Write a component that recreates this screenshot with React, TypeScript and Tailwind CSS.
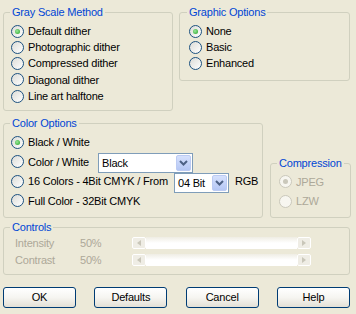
import React from "react";

const font = "font-['Liberation_Sans',Arial,sans-serif] text-[11px] tracking-[-0.2px]";

function Radio({ checked = false, disabled = false }: { checked?: boolean; disabled?: boolean }) {
  return (
    <span
      className={`flex items-center justify-center w-[13px] h-[13px] shrink-0 rounded-full border ${
        disabled
          ? "border-[#CAC8BB] bg-[#F7F6F0]"
          : "border-[#1C5180] bg-linear-to-br from-[#DCDCD7] to-white"
      }`}
    >
      {checked && (
        <span
          className={`w-[5px] h-[5px] rounded-full ${
            disabled
              ? "bg-[#CAC8BB]"
              : "bg-[radial-gradient(circle_at_40%_40%,#9BE89B,#21A121)]"
          }`}
        />
      )}
    </span>
  );
}

function Option({
  label,
  checked,
  disabled,
  rowClass = "h-[16.25px]",
}: {
  label: string;
  checked?: boolean;
  disabled?: boolean;
  rowClass?: string;
}) {
  return (
    <div className={`flex items-center gap-[4px] ${rowClass}`}>
      <Radio checked={checked} disabled={disabled} />
      <span className={disabled ? "text-[#ACA899]" : "text-black"}>{label}</span>
    </div>
  );
}

function Group({
  title,
  className,
  legendClass = "ml-[6px]",
  children,
}: {
  title: string;
  className: string;
  legendClass?: string;
  children: React.ReactNode;
}) {
  return (
    <fieldset className={`border border-[#D0D0BF] rounded-[3px] ${className}`}>
      <legend className={`px-[2px] leading-[14px] text-[#0046D5] ${legendClass}`}>{title}</legend>
      {children}
    </fieldset>
  );
}

function Combo({ value, width, className = "" }: { value: string; width: string; className?: string }) {
  return (
    <div className={`flex items-center justify-between h-[20px] border border-[#7F9DB9] bg-white ${width} ${className}`}>
      <span className="pl-[3px] text-black">{value}</span>
      <span className="flex items-center justify-center w-[15px] h-[16px] mr-[1px] rounded-[2px] border border-[#BCCBF3] bg-linear-to-b from-[#D6E1FD] to-[#B5C7F4]">
        <svg width="9" height="6" viewBox="0 0 9 6">
          <path d="M1 1 L4.5 4.5 L8 1" fill="none" stroke="#4D6185" strokeWidth="2" />
        </svg>
      </span>
    </div>
  );
}

function ScrollBar() {
  return (
    <div className="flex w-[179px] h-[12px]">
      <span className="flex items-center justify-center w-[14px] h-full rounded-[2px] border border-white bg-[#EFEDE5]">
        <svg width="4" height="6" viewBox="0 0 4 6">
          <path d="M4 0 L0 3 L4 6 Z" fill="#C9C6B9" />
        </svg>
      </span>
      <span className="flex-1 bg-linear-to-b from-[#EFEDE4] via-white to-white" />
      <span className="flex items-center justify-center w-[14px] h-full rounded-[2px] border border-white bg-[#EFEDE5]">
        <svg width="4" height="6" viewBox="0 0 4 6">
          <path d="M0 0 L4 3 L0 6 Z" fill="#C9C6B9" />
        </svg>
      </span>
    </div>
  );
}

function Button({ label }: { label: string }) {
  return (
    <button className="w-[73px] h-[21px] rounded-[3px] border border-[#003C74] bg-linear-to-b from-white via-[#F6F5F1] to-[#E3E0D6] text-black">
      {label}
    </button>
  );
}

export default function App() {
  return (
    <div className={`w-[356px] h-[314px] bg-[#ECE9D8] pt-[5px] px-[3px] ${font}`}>
      <div className="flex items-start gap-[6px]">
        <Group title="Gray Scale Method" className="w-[170px] h-[106px]">
          <div className="pl-[7px] pt-[4px]">
            <Option label="Default dither" checked />
            <Option label="Photographic dither" />
            <Option label="Compressed dither" />
            <Option label="Diagonal dither" />
            <Option label="Line art halftone" />
          </div>
        </Group>
        <Group title="Graphic Options" className="w-[171px] h-[76px]" legendClass="ml-[7px]">
          <div className="pl-[9px] pt-[4px]">
            <Option label="None" checked />
            <Option label="Basic" />
            <Option label="Enhanced" />
          </div>
        </Group>
      </div>

      <div className="flex items-end gap-[7px] mt-[5px]">
        <Group title="Color Options" className="w-[260px] h-[102px]">
          <div className="pl-[7px] pt-[2.5px]">
            <Option label="Black / White" checked rowClass="h-[19.5px]" />
            <div className="flex items-center h-[19.5px]">
              <Radio />
              <span className="ml-[4px] w-[70px]">Color / White</span>
              <Combo value="Black" width="w-[95px]" className="mt-[2.5px]" />
            </div>
            <div className="flex items-center h-[19.5px]">
              <Radio />
              <span className="ml-[4px] w-[146px] whitespace-nowrap">16 Colors - 4Bit CMYK / From</span>
              <Combo value="04 Bit" width="w-[55px]" className="mt-[4px]" />
              <span className="ml-[6px]">RGB</span>
            </div>
            <Option label="Full Color - 32Bit CMYK" rowClass="h-[19.5px]" />
          </div>
        </Group>
        <Group title="Compression" className="w-[81px] h-[62px]" legendClass="ml-[6px]">
          <div className="pl-[8px] pt-[2px]">
            <Option label="JPEG" checked disabled rowClass="h-[19.5px]" />
            <Option label="LZW" disabled rowClass="h-[19.5px]" />
          </div>
        </Group>
      </div>

      <Group title="Controls" className="w-[347px] h-[55px] mt-[2px]">
        <div className="pl-[11px] pt-[0.5px] text-[#ACA899]">
          <div className="flex items-center h-[17px]">
            <span className="w-[65px]">Intensity</span>
            <span className="w-[52px]">50%</span>
            <ScrollBar />
          </div>
          <div className="flex items-center h-[17px]">
            <span className="w-[65px]">Contrast</span>
            <span className="w-[52px]">50%</span>
            <ScrollBar />
          </div>
        </div>
      </Group>

      <div className="flex justify-between w-[347px] mt-[12px]">
        <Button label="OK" />
        <Button label="Defaults" />
        <Button label="Cancel" />
        <Button label="Help" />
      </div>
    </div>
  );
}
